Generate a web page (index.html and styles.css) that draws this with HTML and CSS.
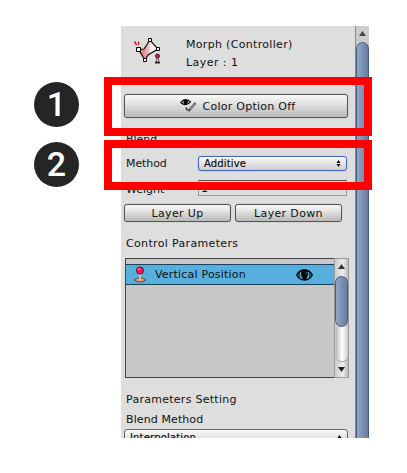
FILE: index.html
```html
<!DOCTYPE html>
<html lang="en">
<head>
<meta charset="utf-8">
<title>Morph Controller</title>
<link rel="stylesheet" href="styles.css">
</head>
<body>
<main class="panel">
  <section class="content">
    <header class="head">
      <svg class="morph" width="28" height="27" viewBox="0 0 28 27">
        <defs><linearGradient id="mg"><stop offset="0" stop-color="#d86464"/><stop offset=".45" stop-color="#f3a9a9"/><stop offset=".65" stop-color="#f4eeee"/></linearGradient></defs>
        <path d="M4.500 12.500L10 12L16 3L24 12L14 18L11 23Z" fill="url(#mg)" stroke="#111" stroke-width="1.200"/>
        <path d="M.5 4.500L2.500 8M4.500 4.500L4.500 8" stroke="#e02020" stroke-width="1.600"/>
        <g fill="#fff" stroke="#000"><path d="M2.500 10.500h4v4h-4zM14.500 1.500h3v3h-3zM22.500 10.500h3v3h-3zM9.500 21.500h3v3h-3z"/></g>
        <path d="M21 25.500h5M23.500 19v6" stroke="#322" stroke-width="2.200"/><path d="M23.500 20v5" stroke="#eab0a0" stroke-width="1.200"/><circle cx="23.500" cy="19" r="2" fill="#dc2050" stroke="#501020"/>
      </svg>
      <div class="titles"><p><span class="t-morph">Morph (Controller)</span></p><p><span class="t-layer">Layer : 1</span></p></div>
    </header>
    <button class="btn option">
      <svg width="17" height="15" viewBox="0 0 17 15"><path d="M.7 4.500Q5.500-1 10.500 4Q6 9 .7 4.500Z" fill="#ddd" stroke="#000" stroke-width="1.100"/><circle cx="5.700" cy="4" r="2.300"/><path d="M6 9.500L7.500 12.500" fill="none" stroke="#333" stroke-width="1.600"/><path d="M8.500 13L15.500 5" stroke="#444" stroke-width="2.200"/><path d="M10 11.300L15 5.600" stroke="#c4c4c4"/></svg>
      <span>Color Option Off</span>
    </button>
    <p class="label blend"><span>Blend</span></p>
    <div class="row method"><span class="label">Method</span><div class="select active"><span>Additive</span><svg width="5" height="7" viewBox="0 0 5 7"><path d="M.5 3L2.500 0L4.500 3ZM.5 4L2.500 7L4.500 4Z"/></svg></div></div>
    <div class="row weight"><span class="label">Weight</span><div class="field">1</div></div>
    <div class="layers"><button class="btn up">Layer Up</button><button class="btn down">Layer Down</button></div>
    <p class="label control">Control Parameters</p>
    <div class="list">
      <div class="items"><div class="item">
        <svg width="12" height="17" viewBox="0 0 12 17"><path d="M.5 14Q3 11.500 6 12Q9 11.500 11.500 14Q9 16 6 16Q3 16 .5 14Z" fill="#f49a62" stroke="#5d4a40"/><path d="M6 7v7" stroke="#d8b8b8" stroke-width="2.200"/><circle cx="6" cy="4.500" r="3.600" fill="#ee1659" stroke="#601838"/><circle cx="5" cy="3.200" r="1" fill="#ff8fac"/></svg>
        <span>Vertical Position</span>
        <svg class="eye" width="17" height="12" viewBox="0 0 17 12"><path d="M.7 6Q3.500 1 8.500 1Q13.500 1 16.300 6Q13.500 11 8.500 11Q3.500 11 .7 6Z" fill="none" stroke="#000" stroke-width="1.400"/><path d="M8.500 .8Q5 1 5 5Q5.500 10 8.500 11Q11.500 10 12 5Q12 1 8.500 .8Z"/><path d="M3.500 3.500Q2.500 6 3.500 8.500M13.500 3.500Q14.500 6 13.500 8.500" stroke="#000" fill="none"/><path d="M9.500 4h1.500" stroke="#57afdd"/></svg>
      </div></div>
      <div class="bar small"><svg width="7" height="5" viewBox="0 0 7 5"><path d="M0 5L3.500 0L7 5Z" fill="#333"/></svg><i class="thumb"></i><i class="track"></i><svg class="dn" width="7" height="5" viewBox="0 0 7 5"><path d="M0 0L3.500 5L7 0Z" fill="#222"/></svg></div>
    </div>
    <p class="label setting">Parameters Setting</p>
    <p class="label bm">Blend Method</p>
    <div class="select interp"><span>Interpolation</span><svg width="5" height="7" viewBox="0 0 5 7"><path d="M.5 3L2.500 0L4.500 3ZM.5 4L2.500 7L4.500 4Z"/></svg></div>
  </section>
  <aside class="bar main"><svg width="7" height="5" viewBox="0 0 7 5"><path d="M0 5L3.500 0L7 5Z" fill="#444"/></svg><i class="thumb"></i></aside>
</main>
<div class="mark one"></div><div class="mark two"></div>
<div class="num n1">1</div><div class="num n2">2</div>
</body>
</html>
```

FILE: styles.css
```css
* { box-sizing: border-box; }
body { margin: 0; width: 407px; height: 473px; background: #fff; overflow: hidden; position: relative; font: 11px/14px "DejaVu Sans", sans-serif; color: #111; }
p { margin: 0; }
svg { display: block; flex: none; }
button { font: inherit; color: inherit; padding: 0; }
.panel { display: flex; width: 248px; height: 412px; margin: 26px 0 0 121px; background: #dedede; overflow: hidden; }
.content { width: 234px; padding-left: 5px; display: flex; flex-direction: column; flex: none; white-space: nowrap; }
.content > * { flex: none; }
.head { height: 68px; display: flex; padding: 11px 0 0 8px; }
.titles { margin-left: 24px; padding-top: 1px; }
.titles p { height: 18px; }
.t-morph { letter-spacing: .32px; }
.t-layer { letter-spacing: .45px; }
.btn { border: 1px solid #555; border-radius: 3px; background: linear-gradient(#fafafa, #dedede 45%, #b9b9b9); display: flex; align-items: center; justify-content: center; box-shadow: 0 0 1px #777; }
.option { width: 224px; height: 24px; margin-left: -2px; gap: 6px; letter-spacing: .25px; padding: 2px 0 0 3px; }
.option svg { margin-top: -3px; }
.blend { margin-top: 15px; }
.row { display: flex; align-items: center; }
.method { height: 16px; margin-top: 8px; }
.method .label { padding-top: 2px; letter-spacing: -.1px; }
.row .label { width: 72px; flex: none; }
.select { height: 15px; border: 1px solid #666; border-radius: 3px; background: linear-gradient(#fafafa, #ccc); display: flex; align-items: center; justify-content: space-between; padding: 1px 5px 0; font-size: 10px; -webkit-text-stroke: .2px #111; letter-spacing: .15px; }
.active { width: 149px; border-color: #4767c4; box-shadow: 0 0 1px #4767c4; }
.weight { height: 16px; margin-top: 9px; }
.weight .label { padding-top: 3px; }
.field { width: 149px; height: 16px; border: 1px solid #999; border-top-color: #555; padding: 1px 0 0 2px; line-height: 14px; }
.layers { display: flex; gap: 4px; margin: 8px 0 0 -2px; }
.layers .btn { width: 107px; height: 18px; letter-spacing: .35px; padding-top: 2px; }
.control { margin-top: 15px; letter-spacing: .34px; }
.list { height: 120px; width: 224px; margin: 7px 0 0 -1px; display: flex; background: #c8c8c8; }
.items { width: 209px; border: 1px solid #444; border-right: 0; padding-top: 5px; }
.item { height: 21px; background: #57afdd; border-top: 1px solid #174257; border-bottom: 1px solid #174257; display: flex; align-items: center; padding-left: 8px; }
.item span { margin-left: 9px; padding-top: 1px; letter-spacing: .2px; width: 141px; }
.bar { display: flex; flex-direction: column; align-items: center; border-left: 1px solid #888; flex: none; }
.small { width: 15px; padding-top: 5px; background: linear-gradient(90deg, #ccc, #eee 60%, #bbb); border: 1px solid #999; }
.thumb { display: block; width: 13px; border: 1px solid #455b82; border-radius: 7px; background: linear-gradient(90deg, #94a6c4, #667da2); }
.small .thumb { height: 51px; margin-top: 7px; flex: none; }
.track { display: block; width: 12px; height: 34px; flex: none; border-radius: 0 0 7px 7px; background: linear-gradient(90deg, #bbb, #fff 50%, #ccc); box-shadow: 0 1px 1px #999; }
.dn { margin-top: 6px; }
.setting { margin-top: 15px; letter-spacing: .27px; }
.bm { margin-top: 6px; letter-spacing: .1px; }
.interp { width: 224px; height: 17px; margin: 2px 0 0 -2px; }
.main { width: 14px; padding-top: 5px; background: #ccc; }
.main .thumb { height: 420px; margin-top: 6px; flex: none; }
.mark { position: absolute; left: 104px; width: 268px; border: 8px solid #f00; }
.one { top: 77px; height: 59px; }
.two { top: 140px; height: 50px; }
.num { position: absolute; left: 34px; width: 45px; height: 45px; border-radius: 50%; background: #252525; color: #fff; font: 500 34px/45px Roboto, sans-serif; text-align: center; }
.n1 { top: 82px; }
.n2 { top: 142px; }
```
